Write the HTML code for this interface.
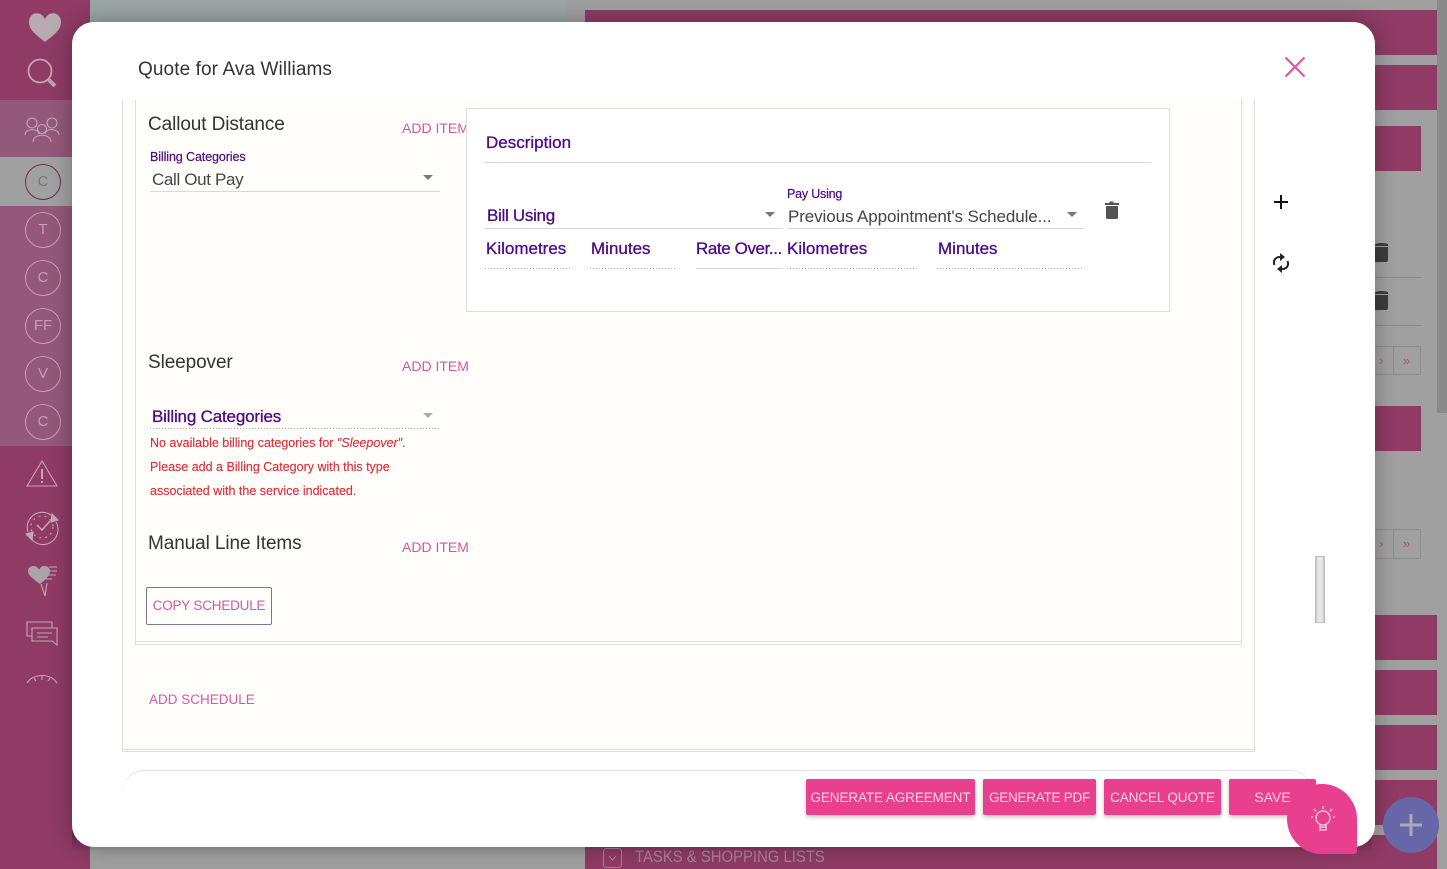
<!DOCTYPE html>
<html><head><meta charset="utf-8"><style>
html,body{margin:0;padding:0;width:1447px;height:869px;overflow:hidden;background:#a0a0a0}
body{position:relative;font-family:"Liberation Sans",sans-serif}
.a{position:absolute;white-space:nowrap;line-height:1}
.b{position:absolute;background:#8f3b65}
.c{position:absolute;left:25px;width:34px;height:34px;border:1px solid #c99db4;border-radius:50%;color:#c99db4;font-size:15px;line-height:34px;text-align:center}
.h{font-size:19px;color:#333;letter-spacing:-.1px}
.add{font-size:14px;color:#d25aa0}
.lab{font-size:12.5px;color:#4b0a82;-webkit-text-stroke:.2px #4b0a82}
.p{font-size:17px;color:#4b0a82;-webkit-text-stroke:.3px #4b0a82}
.v{font-size:17px;color:#444}
.l{position:absolute;height:0;border-bottom:1px solid #d8d8d8}
.d{position:absolute;height:1px;background:repeating-linear-gradient(90deg,#aaa 0,#aaa 1px,transparent 1px,transparent 3px)}
.ar{position:absolute;width:0;height:0;border-left:5px solid transparent;border-right:5px solid transparent;border-top:5px solid #777}
.err{font-size:12.5px;color:#d8323c;-webkit-text-stroke:.15px #d8323c}
.btn{position:absolute;top:779px;height:36px;background:#e8408f;border-radius:2px;color:#fbd3e6;font-size:13.5px;line-height:37px;text-align:center;box-shadow:0 2px 4px rgba(0,0,0,.25);white-space:nowrap}
</style></head><body>
<!-- background -->
<div style="position:absolute;left:90px;top:0;width:475px;height:100px;background:#9ba5a5"></div>
<div style="position:absolute;left:0;top:0;width:90px;height:869px;background:#8f3b65"></div>
<div style="position:absolute;left:0;top:100px;width:90px;height:57px;background:#94587a"></div>
<div style="position:absolute;left:0;top:157px;width:90px;height:49px;background:#a0a0a0"></div>
<div style="position:absolute;left:0;top:206px;width:90px;height:240px;background:#94587a"></div>
<div class="b" style="left:585px;top:10px;width:852px;height:45px"></div>
<div class="b" style="left:585px;top:65px;width:852px;height:45px"></div>
<div class="b" style="left:585px;top:126px;width:836px;height:45px"></div>
<div class="b" style="left:585px;top:406px;width:836px;height:45px"></div>
<div class="b" style="left:585px;top:615px;width:852px;height:45px"></div>
<div class="b" style="left:585px;top:670px;width:852px;height:45px"></div>
<div class="b" style="left:585px;top:725px;width:852px;height:45px"></div>
<div class="b" style="left:585px;top:780px;width:852px;height:45px"></div>
<div class="b" style="left:585px;top:835px;width:852px;height:34px"></div>
<div style="position:absolute;left:1437px;top:0;width:10px;height:413px;background:#8a8a8a"></div>
<div class="l" style="left:1375px;top:277px;width:46px;border-color:#8c8c8c"></div>
<div class="l" style="left:1375px;top:325px;width:46px;border-color:#8c8c8c"></div>
<svg style="position:absolute;left:1375px;top:243px" width="14" height="20" fill="#3c3c3c"><path d="M0 1Q6-1 13 1V3H0ZM0 4H13V17Q13 19 11 19H0Z"/></svg>
<svg style="position:absolute;left:1375px;top:291px" width="14" height="20" fill="#3c3c3c"><path d="M0 1Q6-1 13 1V3H0ZM0 4H13V17Q13 19 11 19H0Z"/></svg>
<div style="position:absolute;left:1375px;top:346px;width:46px;height:29px;border:1px solid #8e8e8e;border-left:0;box-sizing:border-box"></div>
<div style="position:absolute;left:1393px;top:346px;width:1px;height:29px;background:#8e8e8e"></div>
<div style="position:absolute;left:1375px;top:529px;width:46px;height:30px;border:1px solid #8e8e8e;border-left:0;box-sizing:border-box"></div>
<div style="position:absolute;left:1393px;top:529px;width:1px;height:30px;background:#8e8e8e"></div>
<div class="a" style="left:1403px;top:354px;font-size:13px;color:#a0587c">»</div>
<div class="a" style="left:1403px;top:537px;font-size:13px;color:#a0587c">»</div>
<div class="a" style="left:1379px;top:354px;font-size:13px;color:#8f6a7d">›</div>
<div class="a" style="left:1379px;top:537px;font-size:13px;color:#8f6a7d">›</div>
<div class="a" style="left:635px;top:848px;font-size:17px;color:#a8839a;transform:scaleX(.875);transform-origin:0 0">TASKS &amp; SHOPPING LISTS</div>
<svg style="position:absolute;left:603px;top:848px" width="20" height="21" fill="none" stroke="#a8839a"><rect x=".5" y=".5" width="18" height="19" rx="3"/><path d="M6 8L9.500 12L13 8"/></svg>
<div style="position:absolute;left:72px;top:830px;width:1300px;height:39px;background:linear-gradient(rgba(0,0,0,.3),rgba(0,0,0,0) 22px)"></div>

<!-- sidebar icons -->
<svg style="position:absolute;left:0;top:0" width="90" height="700" viewBox="0 0 90 700" fill="none" stroke="#c7a5b6" stroke-width="1.1">
<path d="M45 42C38 36 29 31 29 22C29 12 41 10 45 19C49 10 61 12 61 22C61 31 52 36 45 42Z" fill="#b9aab1" stroke="none"/>
<circle cx="40" cy="71" r="11.500" stroke-width="1.800"/><path d="M48 79L55 86" stroke-width="4" stroke="#b9a3b0"/>
<circle cx="32" cy="123" r="5"/><circle cx="42" cy="129" r="4.500"/><circle cx="52" cy="123" r="5"/>
<path d="M25 135C25 128 39 128 39 134M45 134C45 128 59 128 59 135M33 142C33 133 51 133 51 142"/>
<path d="M42 461L27 486H57Z"/><path d="M42 469V479M42 481V483" stroke-width="2"/>
<path d="M28 532A15 15 0 0 1 54 518M56 522A15 15 0 0 1 30 537"/><circle cx="42" cy="527" r="11" stroke-dasharray="2 4"/><path d="M37 525L42 530L50 521" stroke-width="1.500"/><path d="M52 514L58 520L51 522Z M32 540L26 534L33 532Z" fill="#b9aab1"/>
<path d="M40 584C35 580 28 576 28 571C28 565 37 564 39 570C41 564 50 565 50 571C50 576 45 580 40 584Z" fill="#aca2a8" stroke="none"/>
<path d="M49 567H57M50 571H57M48 575H56M46 579H52M41 584L45 596L47 583"/>
<path d="M27 622H52V636H27Z"/><path d="M32 628H57V645L52 641H32Z" fill="#8f3b65"/><path d="M37 633H52M37 637H48"/>
<path d="M27 683C33 673 51 673 57 683M42 676V680M34 678L36 681M50 678L48 681"/>
</svg>
<div class="c" style="top:164px;border-color:#6f2a4f;color:#777">C</div>
<div class="c" style="top:212px">T</div>
<div class="c" style="top:260px">C</div>
<div class="c" style="top:308px">FF</div>
<div class="c" style="top:356px">V</div>
<div class="c" style="top:404px">C</div>

<!-- modal -->
<div style="position:absolute;left:72px;top:22px;width:1303px;height:825px;background:#fff;border-radius:22px;box-shadow:0 0 22px rgba(0,0,0,.3)"></div>
<div class="a" style="left:138px;top:60px;font-size:19px;color:#333;letter-spacing:.1px">Quote for Ava Williams</div>
<svg style="position:absolute;left:1284px;top:56px" width="22" height="22" fill="none" stroke="#e0569a" stroke-width="2.200"><path d="M1.500 1.500L20.500 20.500M20.500 1.500L1.500 20.500"/></svg>

<!-- content panel -->
<div style="position:absolute;left:122px;top:100px;width:1131px;height:651px;background:#fffefb;border:1px solid #dedede;border-top:0"></div>
<div style="position:absolute;left:122px;top:749px;width:1133px;height:0;border-bottom:1px solid #dedede"></div>
<div style="position:absolute;left:135px;top:100px;width:1105px;height:544px;border:1px solid #dedede;border-top:0"></div>
<div style="position:absolute;left:135px;top:641px;width:1106px;height:0;border-bottom:1px solid #dedede"></div>

<div class="a h" style="left:148px;top:115px">Callout Distance</div>
<div class="a add" style="left:402px;top:121px">ADD ITEM</div>
<div class="a lab" style="left:150px;top:151px;letter-spacing:-.1px">Billing Categories</div>
<div class="a v" style="left:152px;top:171px;letter-spacing:-.35px">Call Out Pay</div>
<div class="ar" style="left:423px;top:175px"></div>
<div class="l" style="left:150px;top:191px;width:290px"></div>

<div style="position:absolute;left:466px;top:108px;width:702px;height:202px;background:#fff;border:1px solid #dedede"></div>
<div class="a p" style="left:486px;top:134px">Description</div>
<div class="l" style="left:485px;top:162px;width:666px"></div>
<div class="a p" style="left:487px;top:207px;letter-spacing:-.3px">Bill Using</div>
<div class="ar" style="left:765px;top:212px"></div>
<div class="l" style="left:485px;top:228px;width:298px"></div>
<div class="a lab" style="left:787px;top:188px;letter-spacing:-.2px">Pay Using</div>
<div class="a v" style="left:788px;top:208px;letter-spacing:-.1px">Previous Appointment's Schedule...</div>
<div class="ar" style="left:1067px;top:212px"></div>
<div class="l" style="left:787px;top:228px;width:297px"></div>
<svg style="position:absolute;left:1104px;top:200px" width="16" height="20" fill="#555"><path d="M1 3H5.500V1.500H9.500V3H15V5H1ZM2 6H14V17.500A1.500 1.500 0 0 1 12.500 19H3.500A1.500 1.500 0 0 1 2 17.500Z"/></svg>
<div class="a p" style="left:486px;top:240px">Kilometres</div>
<div class="a p" style="left:591px;top:240px">Minutes</div>
<div class="a p" style="left:696px;top:240px;letter-spacing:-.4px">Rate Over...</div>
<div class="a p" style="left:787px;top:240px">Kilometres</div>
<div class="a p" style="left:938px;top:240px">Minutes</div>
<div class="d" style="left:485px;top:268px;width:87px"></div>
<div class="d" style="left:590px;top:268px;width:86px"></div>
<div class="l" style="left:696px;top:268px;width:87px"></div>
<div class="d" style="left:787px;top:268px;width:130px"></div>
<div class="d" style="left:937px;top:268px;width:146px"></div>

<div class="a h" style="left:148px;top:353px">Sleepover</div>
<div class="a add" style="left:402px;top:359px">ADD ITEM</div>
<div class="a p" style="left:152px;top:408px;letter-spacing:-.18px">Billing Categories</div>
<div class="ar" style="left:423px;top:413px;border-top-color:#aaa"></div>
<div class="d" style="left:150px;top:428px;width:290px"></div>
<div class="a err" style="left:150px;top:437px">No available billing categories for <i>"Sleepover"</i>.</div>
<div class="a err" style="left:150px;top:461px">Please add a Billing Category with this type</div>
<div class="a err" style="left:150px;top:485px">associated with the service indicated.</div>

<div class="a h" style="left:148px;top:534px">Manual Line Items</div>
<div class="a add" style="left:402px;top:540px">ADD ITEM</div>
<div class="a add" style="left:146px;top:587px;width:124px;height:36px;line-height:36px;border:1px solid #86708f;border-radius:2px;text-align:center;font-size:13.500px;letter-spacing:-.2px">COPY SCHEDULE</div>
<div class="a add" style="left:149px;top:693px;font-size:13.500px">ADD SCHEDULE</div>

<!-- right tools -->
<svg style="position:absolute;left:1272px;top:193px" width="18" height="18" stroke="#111" stroke-width="2"><path d="M2 9H16M9 2V16"/></svg>
<svg style="position:absolute;left:1271px;top:252px" width="20" height="22" fill="none" stroke="#222" stroke-width="2"><path d="M3.500 13C1.500 8 5 4.500 10 5M16.500 9C18.500 14 15 17.500 10 17"/><path d="M9 1V9L14 5ZM11 13V21L6 17Z" fill="#222" stroke="none"/></svg>
<div style="position:absolute;left:1315px;top:556px;width:10px;height:67px;box-sizing:border-box;background:#e6e6e6;border:1px solid #c4c4c4;border-width:1px 2px"></div>

<!-- footer -->
<div style="position:absolute;left:122px;top:770px;width:1190px;height:40px;border-top:1px solid #e2e2e2;border-radius:22px 22px 0 0"></div>
<div class="btn" style="left:806px;width:169px;letter-spacing:-.1px">GENERATE AGREEMENT</div>
<div class="btn" style="left:983px;width:113px;letter-spacing:-.25px">GENERATE PDF</div>
<div class="btn" style="left:1104px;width:117px;letter-spacing:-.1px">CANCEL QUOTE</div>
<div class="btn" style="left:1229px;width:87px;font-size:14px">SAVE</div>
<div style="position:absolute;left:1287px;top:784px;width:70px;height:70px;background:#e8408f;border-radius:36px 36px 3px 36px"></div>
<svg style="position:absolute;left:1308px;top:805px" width="30" height="30" fill="none" stroke="#f8d4e6" stroke-width="1.300"><circle cx="15" cy="13" r="7"/><path d="M12 19V25H18V19M12 22H18M15 1V4M6 4L8 6.500M24 4L22 6.500M3 12H5M25 12H27"/></svg>
<div style="position:absolute;left:1383px;top:797px;width:56px;height:56px;background:#6666a8;border-radius:50%"></div>
<svg style="position:absolute;left:1399px;top:813px" width="24" height="24" stroke="#a9a9b8" stroke-width="3"><path d="M1 12H23M12 1V23"/></svg>
</body></html>
